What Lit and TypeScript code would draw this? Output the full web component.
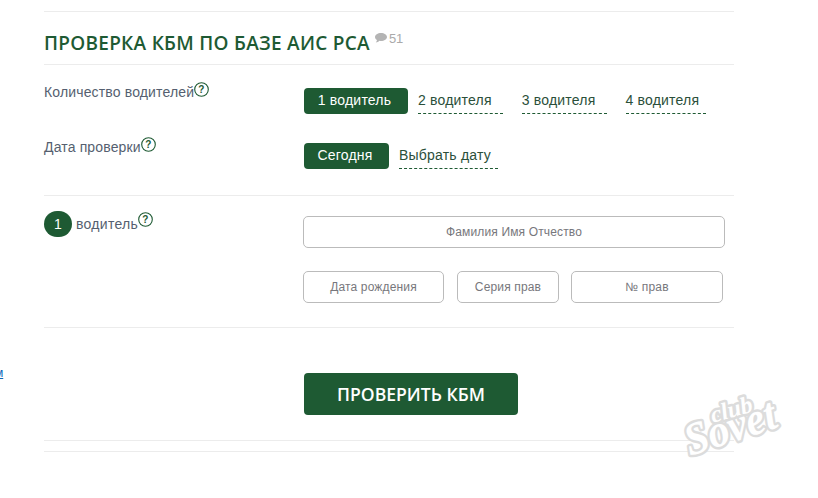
import { LitElement, html, css } from "lit";
import { customElement } from "lit/decorators.js";

const help = html`<svg class="help" width="15" height="15" viewBox="0 0 15 15"><circle cx="7.5" cy="7.500" r="6.800" fill="none" stroke="#1e5a33" stroke-width="1.100"/><text x="7.500" y="11.200" text-anchor="middle" font-family="Liberation Sans" font-weight="700" font-size="10" fill="#1e5a33">?</text></svg>`;

@customElement("app-root")
export class AppRoot extends LitElement {
  static styles = css`
    :host { display: block; position: relative; width: 818px; height: 498px; overflow: hidden; background: #fff; font-family: "Liberation Sans", Arial, sans-serif; color: #4a5568; }
    .page { width: 690px; margin-left: 44px; padding-top: 11px; }
    .sec { border-top: 1px solid #ececec; }
    .head { height: 53px; display: flex; align-items: flex-start; padding-top: 18px; box-sizing: border-box; }
    h1 { margin: 0; font: 600 19px/26px "Open Sans", sans-serif; color: #1e5a33; letter-spacing: 0.28px; }
    .count { display: flex; align-items: center; gap: 2px; margin: -1px 0 0 5px; font-size: 13px; color: #aaa; height: 18px; }
    .opts { height: 131px; box-sizing: border-box; padding-top: 23px; }
    .row { display: flex; height: 55px; }
    .label { width: 260px; font-size: 14px; line-height: 16px; letter-spacing: 0.15px; color: #555f70; display: flex; align-items: flex-start; }
    .label span { margin-top: -4px; }
    .help { flex: none; margin-top: -6px; }
    .choices { display: flex; align-items: flex-start; }
    .on { box-sizing: border-box; width: 104px; height: 26px; padding-right: 3px; background: #1e5a33; color: #fff; border-radius: 4px; font-size: 14px; letter-spacing: 0.2px; line-height: 25px; text-align: center; }
    .on.today { width: 85px; }
    .alt { box-sizing: border-box; height: 26px; font-size: 14px; letter-spacing: 0.2px; line-height: 24px; color: #2b4f3a; border-bottom: 1px dashed #1e5a33; margin-left: 10px; padding-right: 11px; }
    .alt + .alt { margin-left: 19px; }
    .alt.tight { padding-right: 7px; }
    .driver { height: 132px; box-sizing: border-box; padding-top: 15px; display: flex; }
    .who { width: 259px; display: flex; align-items: flex-start; font-size: 14px; letter-spacing: 0.3px; color: #555f70; }
    .badge { width: 28px; height: 26px; border-radius: 13px; background: #1e5a33; color: #fff; font-size: 14px; line-height: 26px; text-align: center; margin: 0 4px 0 0; }
    .who span { margin-top: 5px; }
    .who .help { margin-top: 1px; }
    .fields { display: flex; flex-direction: column; gap: 23px; padding-top: 5px; }
    .line { display: flex; gap: 12px; }
    .line + .line .f { line-height: 31px; }
    .f { box-sizing: border-box; height: 32px; border: 1px solid #bbb; border-radius: 5px; font-size: 12px; letter-spacing: 0.15px; line-height: 30px; text-align: center; color: #77777c; }
    .w422 { width: 422px; } .w141 { width: 141px; margin-right: 1px; } .w102 { width: 102px; } .w152 { width: 152px; }
    .submit { height: 113px; box-sizing: border-box; padding: 45px 0 0 260px; }
    .btn { width: 214px; height: 42px; border-radius: 4px; background: #1e5a33; color: #fff; font: 600 17.600px/42px "Open Sans", sans-serif; text-align: center; }
    .gap { height: 10px; }
    .cut { position: absolute; left: -5px; top: 366px; font-size: 12px; line-height: 14px; color: #0a66b8; text-decoration: underline; }
    .mark { position: absolute; left: 682px; top: 378px; overflow: visible; }
    .mark text { font-family: "Liberation Serif", serif; font-style: italic; font-weight: 700; fill: #fff; stroke: #dcdcdc; stroke-width: 5px; stroke-linejoin: round; paint-order: stroke; }
  `;

  render() {
    return html`
      <div class="page">
        <div class="sec head">
          <h1>ПРОВЕРКА КБМ ПО БАЗЕ АИС РСА</h1>
          <div class="count">
            <svg width="12" height="10" viewBox="0 0 12 10"><path d="M6 0C2.700 0 0 1.700 0 4c0 1.200.8 2.300 2 3-.1.900-.6 1.900-1.200 2.600 1.400-.2 2.700-.9 3.600-1.800.5.100 1 .2 1.600.2 3.300 0 6-1.800 6-4S9.300 0 6 0Z" fill="#b4b4b4"/></svg>51
          </div>
        </div>
        <div class="sec opts">
          <div class="row">
            <div class="label"><span>Количество водителей</span>${help}</div>
            <div class="choices">
              <div class="on">1 водитель</div>
              <div class="alt">2 водителя</div>
              <div class="alt">3 водителя</div>
              <div class="alt tight">4 водителя</div>
            </div>
          </div>
          <div class="row">
            <div class="label"><span>Дата проверки</span>${help}</div>
            <div class="choices">
              <div class="on today">Сегодня</div>
              <div class="alt tight">Выбрать дату</div>
            </div>
          </div>
        </div>
        <div class="sec driver">
          <div class="who"><div class="badge">1</div><span>водитель</span>${help}</div>
          <div class="fields">
            <div class="line"><div class="f w422">Фамилия Имя Отчество</div></div>
            <div class="line">
              <div class="f w141">Дата рождения</div>
              <div class="f w102">Серия прав</div>
              <div class="f w152">№ прав</div>
            </div>
          </div>
        </div>
        <div class="sec submit"><div class="btn">ПРОВЕРИТЬ КБМ</div></div>
        <div class="sec gap"></div>
        <div class="sec"></div>
      </div>
      <div class="cut">м</div>
      <svg class="mark" width="130" height="110" viewBox="0 0 130 110">
        <text x="31" y="45" font-size="24" transform="rotate(-16 31 45)">club</text>
        <text x="8" y="78" font-size="46" transform="rotate(-18 8 78)" textLength="94" lengthAdjust="spacingAndGlyphs">Sovet</text>
      </svg>
    `;
  }
}
